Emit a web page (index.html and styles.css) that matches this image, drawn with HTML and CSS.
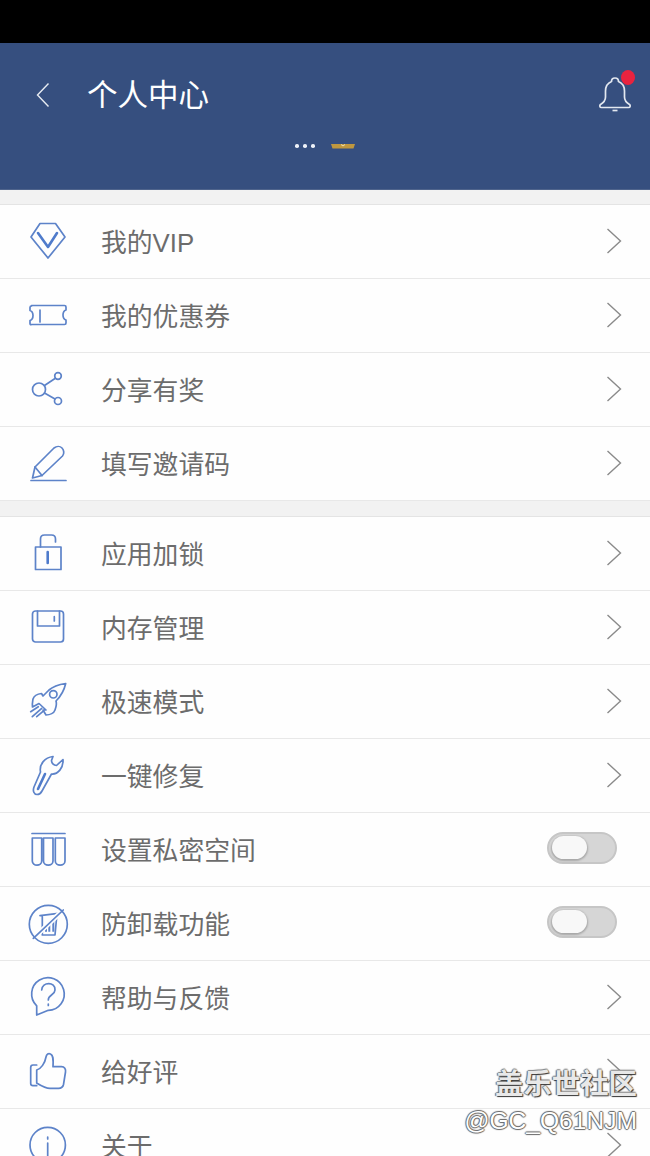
FILE: index.html
```html
<!DOCTYPE html>
<html lang="zh">
<head>
<meta charset="utf-8">
<title>个人中心</title>
<link rel="stylesheet" href="styles.css">
</head>
<body>
<div class="phone">
  <div class="statusbar"></div>
  <header class="header">
    <div class="topbar">
      <svg class="back" viewBox="0 0 14 26"><path d="M12.500 1.500 1.500 13l11 11.500"/></svg>
      <h1 class="title">个人中心</h1>
      <div class="bell">
        <svg viewBox="0 0 32 36"><path d="M16 1c-2 0-3.500 1.500-3.500 3.500C9 6 6.500 9 6.500 14v6c0 4-2.500 6-5 7.500-1 .8-1 3 1 3h27c2 0 2-2.200 1-3-2.500-1.500-5-3.500-5-7.500v-6c0-5-2.500-8-6-9.500C19.500 2.500 18 1 16 1Z"/><path class="bell-tip" d="M13.500 33.500h5"/></svg>
        <span class="dot"></span>
      </div>
    </div>
    <div class="account">
      <div class="dots"><span></span><span></span><span></span></div>
      <svg class="crown" viewBox="0 0 24 6"><path class="crown-base" d="M0 1h24l-1.500 4.500h-21Z"/><path class="crown-mark" d="M10 1.500l2 1.500 2-1.500"/></svg>
    </div>
  </header>

  <div class="gap"></div>
  <section class="group">
    <div class="row"><svg class="ico" viewBox="0 0 40 40"><path d="M12 1.500h15.500L37 15 20 36 3 15Z"/><path class="thick" d="M10 11l10 14 9-14"/></svg><span class="label">我的VIP</span><svg class="chev" viewBox="0 0 16 26"><path d="M1.500 1 14.500 13 1.500 25"/></svg></div>
    <div class="row"><svg class="ico" viewBox="0 0 40 40"><path d="M3.500 9.500h33q1.500 0 1.500 1.500v3q-3 1-3 5t3 5v3q0 1.500-1.500 1.500h-33Q2 29 2 27.500v-3q3-1 3-5t-3-5v-3q0-1.500 1.500-1.500Z"/><path d="M12 14v12"/></svg><span class="label">我的优惠券</span><svg class="chev" viewBox="0 0 16 26"><path d="M1.500 1 14.500 13 1.500 25"/></svg></div>
    <div class="row"><svg class="ico" viewBox="0 0 40 40"><circle cx="11" cy="19.500" r="6.500"/><circle cx="30" cy="6" r="3.300"/><circle cx="30" cy="31" r="3.500"/><path d="M16.500 15.500 27 8.500M16.500 23 27 29"/></svg><span class="label">分享有奖</span><svg class="chev" viewBox="0 0 16 26"><path d="M1.500 1 14.500 13 1.500 25"/></svg></div>
    <div class="row"><svg class="ico" viewBox="0 0 40 40"><path d="M3 36.500h35"/><path d="M4.500 34 7 23 26 4c2.500-2 6-2 8 0s2.500 5.500.500 8L14 31.500Z"/><path d="M7 23l7 8.500"/></svg><span class="label">填写邀请码</span><svg class="chev" viewBox="0 0 16 26"><path d="M1.500 1 14.500 13 1.500 25"/></svg></div>
  </section>

  <div class="gap"></div>
  <section class="group">
    <div class="row"><svg class="ico" viewBox="0 0 40 40"><rect x="7.500" y="13" width="25.500" height="22.500"/><path d="M12.500 13V5q0-4 4-4h7q4 0 4 4v3"/><path class="thick" d="M19.700 18v11"/></svg><span class="label">应用加锁</span><svg class="chev" viewBox="0 0 16 26"><path d="M1.500 1 14.500 13 1.500 25"/></svg></div>
    <div class="row"><svg class="ico" viewBox="0 0 40 40"><rect x="4.500" y="3" width="31" height="31" rx="3"/><path d="M9.500 3v15h22V3"/><path d="M26.300 8.700v4.300"/></svg><span class="label">内存管理</span><svg class="chev" viewBox="0 0 16 26"><path d="M1.500 1 14.500 13 1.500 25"/></svg></div>
    <div class="row"><svg class="ico" viewBox="0 0 40 40"><path d="M37.700 1.500C31 2.500 26 3.500 21 8l-6 6-1.500-2.500C9 12 6 14 5 17c-.5 3-1 5-.5 8l6.500-3.500 7 6.500-3 0 3 5c4 0 8-2 9-5 1.500-4 2-6 1-9 5-5 8-10 9.700-17.500Z"/><circle cx="25.300" cy="12.300" r="3.700"/><path d="M2.700 29.700 10.300 24.700M4.300 34.700 13.700 26.300M8.700 34.700 14.700 29.700"/></svg><span class="label">极速模式</span><svg class="chev" viewBox="0 0 16 26"><path d="M1.500 1 14.500 13 1.500 25"/></svg></div>
    <div class="row"><svg class="ico" viewBox="0 0 40 40"><path d="M25 .5C17 1.500 11 8 12.500 16L6 31c-1.500 4 0 7.500 3 7.500 2.500 0 4-1.500 5-3.500l9.500-17C30 18.500 35.500 12 35 3.500L28.500 9.500c-3 0-5-2.500-5-5Z"/><path class="thick" d="M10 33 17 18"/></svg><span class="label">一键修复</span><svg class="chev" viewBox="0 0 16 26"><path d="M1.500 1 14.500 13 1.500 25"/></svg></div>
    <div class="row"><svg class="ico" viewBox="0 0 40 40"><path d="M4 3.500h33"/><path d="M4.300 8h9.400v23c0 5.500-9.400 5.500-9.400 0ZM15.500 8h9.500v23c0 5.500-9.500 5.500-9.500 0ZM27.300 8H37v23c0 5.500-9.700 5.500-9.700 0Z"/></svg><span class="label">设置私密空间</span><div class="toggle"><span class="knob"></span></div></div>
    <div class="row"><svg class="ico" viewBox="0 0 40 40"><path d="M12 11.700 30.300 9.300M14.300 12.700V31h12.700l1.700-18.300"/><path class="bar" d="M18 27.700v-4.400M21.300 27.700v-9.400M25.300 27.700V15"/><path class="halo" d="M5.300 34.300 35.300 6"/><circle cx="20.300" cy="20.300" r="19"/><path d="M5.300 34.300 35.300 6"/></svg><span class="label">防卸载功能</span><div class="toggle"><span class="knob"></span></div></div>
    <div class="row"><svg class="ico" viewBox="0 0 40 40"><path d="M8.700 37V27.800A16.300 16.300 0 1 1 20.300 32.300Z"/><path d="M13.700 12c.500-8.500 13.800-8.500 13.300 0 0 5-6.700 4.500-6.700 10"/><path d="M20.300 26v1.500"/></svg><span class="label">帮助与反馈</span><svg class="chev" viewBox="0 0 16 26"><path d="M1.500 1 14.500 13 1.500 25"/></svg></div>
    <div class="row"><svg class="ico" viewBox="0 0 40 40"><path d="M8.700 13H5c-1.500 0-2.300 1-2.300 2.500v16C2.700 33 3.500 33.700 5 33.700h3.700"/><path d="M8.700 18c4.300-1 8.300-7 9.300-13 .5-3 2.500-4 4.500-3 2.500 1 3 4 2.500 12.700h8.500c3 0 4.500 2.300 4 5.300l-2 12.500c-.5 2.500-2.500 3.800-5 3.800H22c-5 0-10-3.300-13.300-5.300Z"/></svg><span class="label">给好评</span><svg class="chev" viewBox="0 0 16 26"><path d="M1.500 1 14.500 13 1.500 25"/></svg></div>
    <div class="row"><svg class="ico" viewBox="0 0 40 40"><circle cx="19.700" cy="19" r="17.700"/><path d="M19.700 17v13M19.700 11v2"/></svg><span class="label">关于</span><svg class="chev" viewBox="0 0 16 26"><path d="M1.500 1 14.500 13 1.500 25"/></svg></div>
  </section>

  <div class="watermark">
    <div class="wm-title">盖乐世社区</div>
    <div class="wm-user">@GC_Q61NJM</div>
  </div>
</div>
</body>
</html>
```
FILE: styles.css
```css
* { box-sizing: border-box; }
html, body { margin: 0; padding: 0; }
body {
  font-family: "Liberation Sans", "Noto Sans CJK SC", sans-serif;
  background: #fefefe;
}
.phone {
  position: relative;
  width: 650px;
  height: 1156px;
  overflow: hidden;
  background: #fefefe;
}
.statusbar { height: 43px; background: #000; }
.header {
  height: 147px;
  padding-top: 32px;
  background: #364f7f;
  border-bottom: 1px solid #4f648c;
}
.topbar {
  display: flex;
  align-items: center;
  height: 40px;
  padding: 0 19px 0 36px;
}
.back { width: 14px; height: 26px; flex: none; fill: none; stroke: #e8ecf2; stroke-width: 1.4; }
.title {
  margin: 0 0 0 37px;
  flex: 1;
  font-size: 30.500px;
  line-height: 40px;
  font-weight: 400;
  color: #fff;
}
.bell { position: relative; width: 32px; height: 36px; flex: none; }
.bell svg { display: block; width: 32px; height: 36px; fill: none; stroke: #e3e8f0; stroke-width: 1.700; }
.dot {
  position: absolute;
  top: -7px;
  right: -4px;
  width: 14px;
  height: 15px;
  border-radius: 50%;
  background: #e8233f;
}
.account {
  display: flex;
  align-items: center;
  justify-content: center;
  gap: 16px;
  height: 12px;
  margin-top: 25px;
}
.dots { display: flex; gap: 4.500px; }
.dots span { width: 3.500px; height: 3.500px; border-radius: 50%; background: #eef1f8; }
.crown { width: 24px; height: 6px; }
.crown-base { fill: #c0983f; }
.crown-mark { fill: none; stroke: #f2e0b0; stroke-width: 1; }
.gap {
  height: 15px;
  background: #f2f2f2;
  border-bottom: 1px solid #e4e4e4;
}
.group { background: #fefefe; }
.group + .gap { height: 16px; }
.row {
  display: flex;
  align-items: center;
  height: 74px;
  padding: 0 28px;
  border-bottom: 1px solid #e8e8e8;
}
.ico {
  width: 40px;
  height: 40px;
  flex: none;
  fill: none;
  overflow: visible;
  stroke: #5d83c9;
  stroke-width: 1.700;
  stroke-linejoin: round;
  stroke-linecap: round;
}
.ico .thick { stroke-width: 2.600; stroke: #4f7bcb; }
.ico .bar { stroke-width: 2; stroke-linecap: butt; }
.ico .halo { stroke: #fefefe; stroke-width: 5; }
.label {
  flex: 1;
  margin-left: 33px;
  margin-top: 2px;
  font-size: 25.800px;
  line-height: 36px;
  color: #6c6c6c;
}
.chev {
  width: 16px;
  height: 26px;
  flex: none;
  margin-bottom: 2px;
  fill: none;
  stroke: #8a8a8a;
  stroke-width: 1.400;
}
.toggle {
  position: relative;
  width: 70px;
  height: 32px;
  flex: none;
  margin-right: 5px;
  margin-bottom: 3px;
  border-radius: 16px;
  background: #d6d6d6;
  border: 2px solid #c6c6c6;
}
.knob {
  position: absolute;
  left: 3px;
  top: 2px;
  width: 35px;
  height: 23px;
  border-radius: 12px;
  background: #f8f8f8;
  box-shadow: 0 1px 2px 1px #a8a8a8;
}
.watermark {
  position: absolute;
  right: 13px;
  top: 1068px;
  text-align: right;
}
.wm-title {
  font-size: 28.400px;
  line-height: 32px;
  font-weight: 700;
  color: #e8e8e8;
  text-shadow: 1px 1px 1px #333, -1px 0 1px #666, 0 -1px 1px #888;
}
.wm-user {
  margin-top: 7px;
  font-size: 24.600px;
  line-height: 28px;
  color: #fff;
  text-shadow: 1px 0 1px #666, -1px 0 1px #666, 0 1px 1px #666, 0 -1px 1px #666;
}
```
